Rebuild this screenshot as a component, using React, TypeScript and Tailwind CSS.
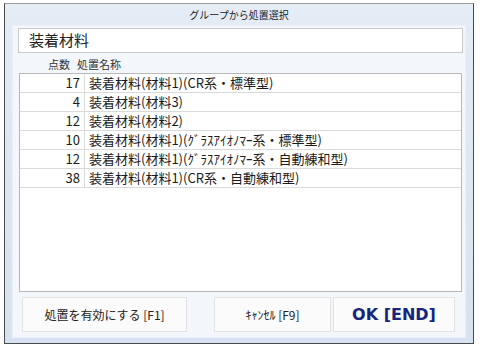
import React from 'react';

const rows = [
  { pts: 17, name: '装着材料(材料1)(CR系・標準型)' },
  { pts: 4, name: '装着材料(材料3)' },
  { pts: 12, name: '装着材料(材料2)' },
  { pts: 10, name: '装着材料(材料1)(ｸﾞﾗｽｱｲｵﾉﾏｰ系・標準型)' },
  { pts: 12, name: '装着材料(材料1)(ｸﾞﾗｽｱｲｵﾉﾏｰ系・自動練和型)' },
  { pts: 38, name: '装着材料(材料1)(CR系・自動練和型)' },
];

const font = { fontFamily: '"Noto Sans CJK JP", "Noto Sans", sans-serif' };

export default function App() {
  return (
    <div className="w-[480px] h-[351px] bg-white pt-[3px] pl-[4px]" style={font}>
      {/* window frame */}
      <div className="w-[470px] h-[341px] flex flex-col border border-[#4a4a4a] border-t-[#9a9a9a] bg-gradient-to-b from-[#e4ecf5] to-[#d6e2ef]">
        <div className="h-[21px] flex items-center justify-center text-[10px] text-[#222]">
          グループから処置選択
        </div>

        {/* client area */}
        <div className="mx-[7px] flex-1 mb-[5px] bg-[#f3f6fa] border border-[#eaf0f7] flex flex-col pl-[5px] pr-[2px] pt-[2px]">
          <div className="h-[25px] bg-white border border-[#c9c9c9] flex items-center pl-[10px] text-[15px] text-[#222]">
            装着材料
          </div>

          <div className="h-[20px] flex items-end pb-[1px] text-[11px] text-[#333]">
            <div className="w-[52px] text-right">点数</div>
            <div className="pl-[7px]">処置名称</div>
          </div>

          <div className="ml-[1px] mr-[1px] h-[219px] bg-white border border-[#b8b8b8] flex flex-col">
            {rows.map((r, i) => (
              <div key={i} className="h-[19px] flex border-b border-[#dadada] text-[13px] text-[#1a1a1a]">
                <div className="w-[65px] border-r border-[#dadada] text-right pr-[4px] leading-[18px]">{r.pts}</div>
                <div className="pl-[4px] leading-[18px] whitespace-nowrap">{r.name}</div>
              </div>
            ))}
          </div>

          <div className="flex mt-[5px] h-[35px] gap-[2px]">
            <button className="ml-[4px] w-[165px] bg-[#fbfbfb] border border-[#e2e2e2] text-[12px] text-[#222]">
              処置を有効にする [F1]
            </button>
            <button className="ml-[25px] w-[117px] bg-[#fbfbfb] border border-[#e2e2e2] text-[12px] text-[#222]">
              ｷｬﾝｾﾙ [F9]
            </button>
            <button
              className="w-[122px] bg-[#fbfbfb] border border-[#e2e2e2] text-[16px] font-bold text-[#17267a]"
              style={{ fontFamily: '"DejaVu Sans", sans-serif' }}
            >
              OK [END]
            </button>
          </div>
        </div>
      </div>
    </div>
  );
}
